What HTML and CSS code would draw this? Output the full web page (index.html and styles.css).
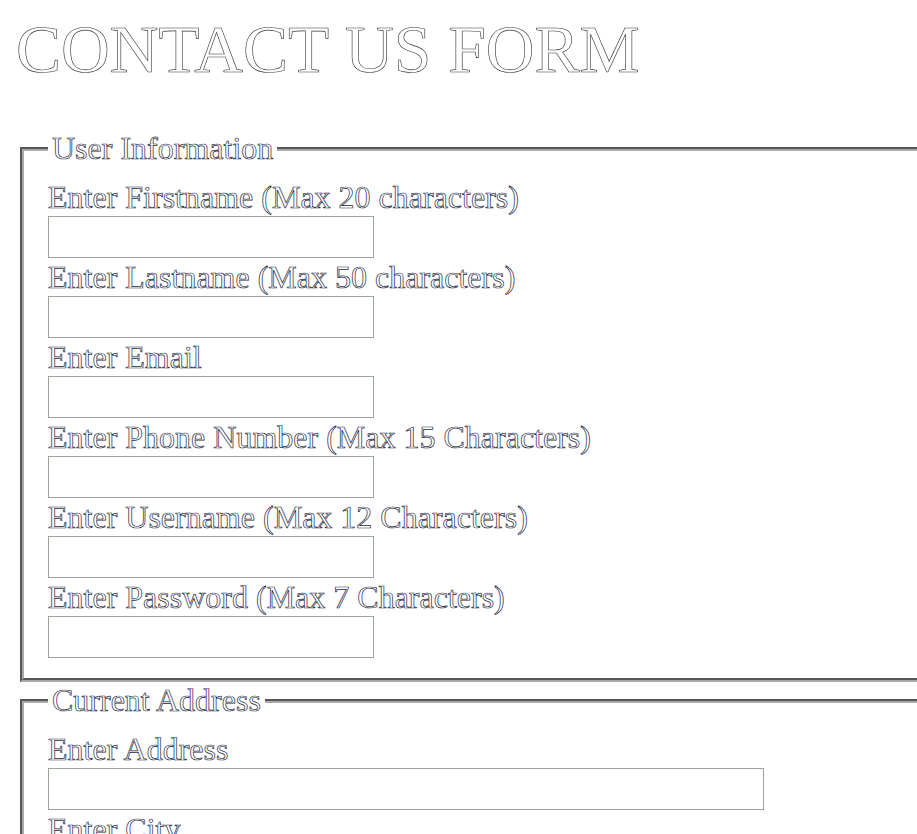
FILE: index.html
```html
<!DOCTYPE html>
<html>
<head>
<meta charset="utf-8">
<title>Contact Us Form</title>
<link rel="stylesheet" href="styles.css">
</head>
<body>
<h1 class="title">CONTACT US FORM</h1>
<form class="form">
  <fieldset class="group">
    <legend class="group-title">User Information</legend>
    <label class="field-label" for="fn">Enter Firstname (Max 20 characters)</label>
    <input class="field" id="fn" type="text" maxlength="20">
    <label class="field-label" for="ln">Enter Lastname (Max 50 characters)</label>
    <input class="field" id="ln" type="text" maxlength="50">
    <label class="field-label" for="em">Enter Email</label>
    <input class="field" id="em" type="text">
    <label class="field-label" for="ph">Enter Phone Number (Max 15 Characters)</label>
    <input class="field" id="ph" type="text" maxlength="15">
    <label class="field-label" for="un">Enter Username (Max 12 Characters)</label>
    <input class="field" id="un" type="text" maxlength="12">
    <label class="field-label" for="pw">Enter Password (Max 7 Characters)</label>
    <input class="field" id="pw" type="password" maxlength="7">
  </fieldset>
  <fieldset class="group">
    <legend class="group-title">Current Address</legend>
    <label class="field-label" for="ad">Enter Address</label>
    <input class="field field-wide" id="ad" type="text">
    <label class="field-label" for="ci">Enter City</label>
    <input class="field" id="ci" type="text">
    <label class="field-label" for="st">Enter State</label>
    <input class="field" id="st" type="text">
  </fieldset>
</form>
</body>
</html>
```
FILE: styles.css
```css
html, body {
  overflow: hidden;
}
body {
  margin: 0;
  padding: 0 0 0 16px;
  background: #ffffff;
  font-family: "Liberation Serif", "Times New Roman", serif;
  color: #ffffff;
  -webkit-text-stroke: 0.7px #1e2840;
}
.title {
  margin: 11px 0 42px 0;
  font-size: 67.5px;
  line-height: 77px;
  font-weight: normal;
  -webkit-text-stroke: 0.6px #333333;
}
.form {
  margin: 0;
  width: 1000px;
}
.group {
  margin: 0 0 0 4px;
  padding: 11px 24px 20px 24px;
  border: 4px groove #a8aaa8;
  min-width: 0;
}
.group-title {
  padding: 0 4px;
  font-size: 32px;
  line-height: 37px;
}
.field-label {
  display: block;
  font-size: 32px;
  line-height: 38px;
  height: 38px;
}
.field {
  display: block;
  box-sizing: border-box;
  width: 326px;
  height: 42px;
  margin: 0;
  padding: 0;
  border: 1px solid #9aa59a;
  background: #ffffff;
  -webkit-text-stroke: 0;
}
.field-wide {
  width: 716px;
}
```
